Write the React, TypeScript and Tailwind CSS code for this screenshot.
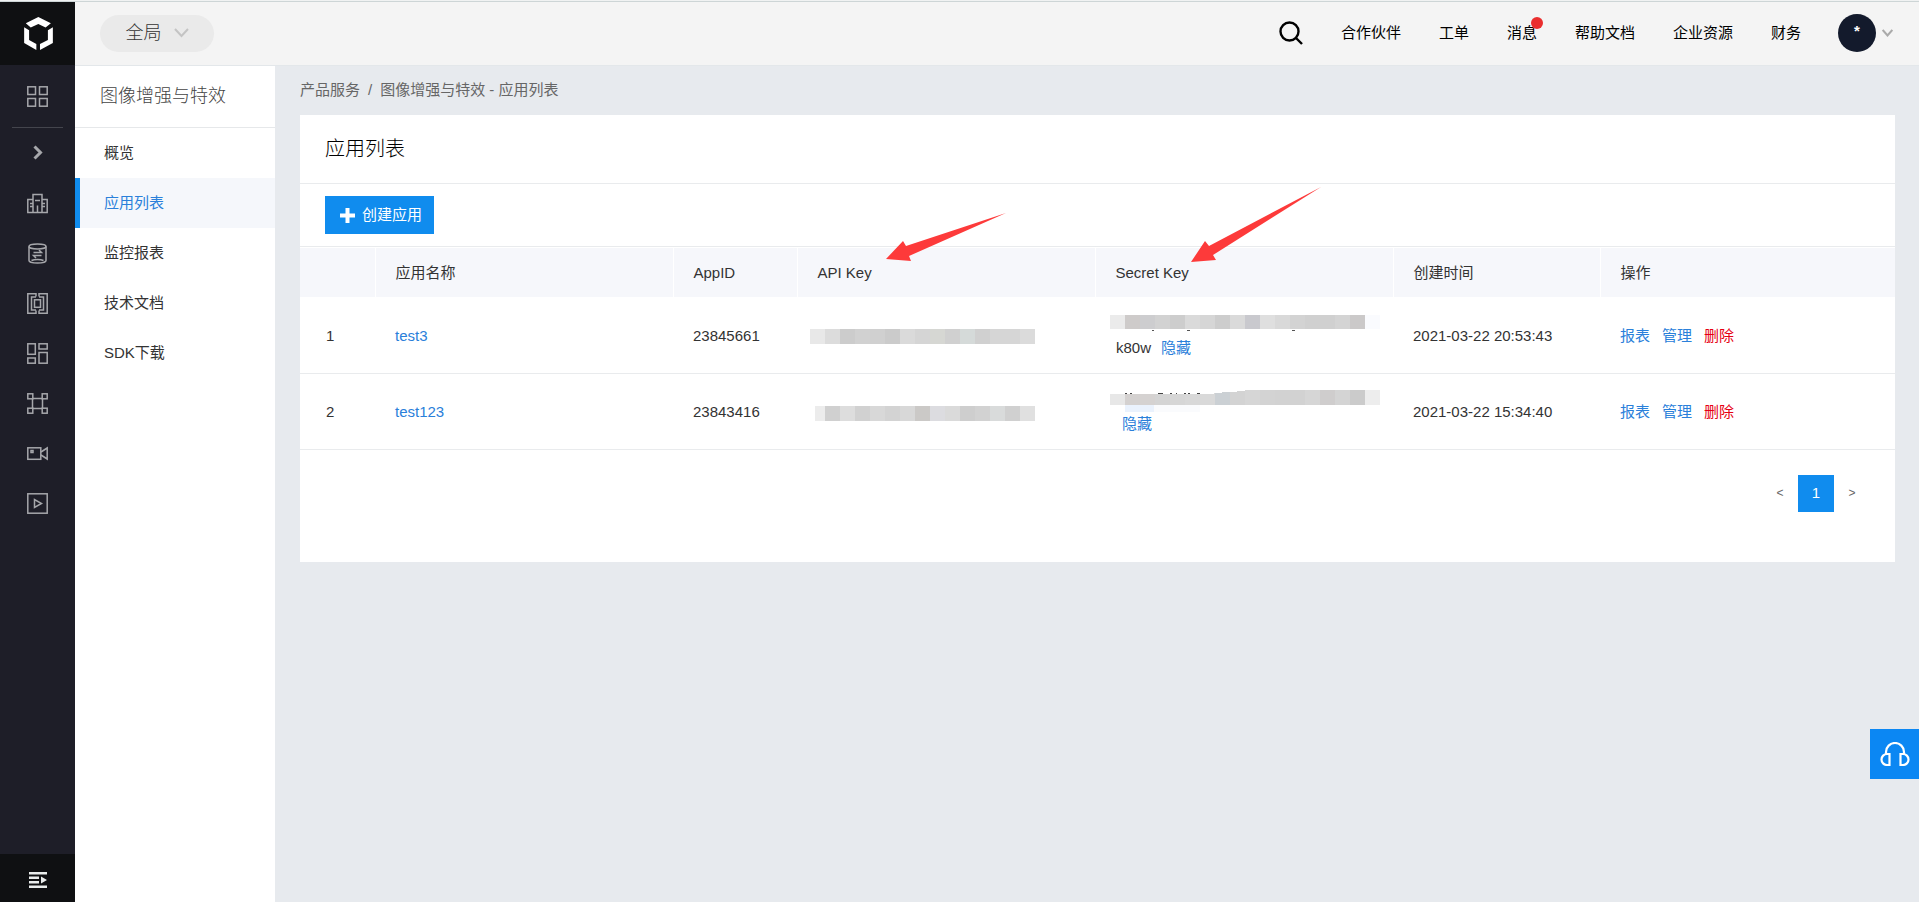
import type { ReactNode } from "react";

const NAV_LINKS = ["合作伙伴", "工单", "消息", "帮助文档", "企业资源", "财务"];

const MENU = ["概览", "应用列表", "监控报表", "技术文档", "SDK下载"];

const API_MASK_1 = [
  "#e8e8e8", "#dcdcdc", "#cccccc", "#d1d1d1", "#d0d0d0", "#cbcbcb", "#dadada", "#d5d5d5",
  "#d6d7d3", "#d0d0d0", "#d5dad9", "#d0d0d0", "#d6d6d6", "#d6d6d6", "#dbdbdb",
];
const API_MASK_2 = [
  "#ececec", "#d0d0d0", "#dddddd", "#d1d1d1", "#d8d8d8", "#d3d3d3", "#d8d8d8", "#cbc9c7",
  "#dcdce0", "#dadada", "#cecece", "#d2d2d2", "#d9dbdb", "#d0d0d0", "#e0e0e0",
];
const SECRET_MASK_1 = [
  "#ebebeb", "#cecbca", "#cdcdcf", "#d2d2d2", "#cdcdcd", "#dadada", "#d6d6d6", "#cdcdcd", "#dadada",
  "#c9c9ce", "#dfdfdf", "#d9d9d9", "#d3d3d3", "#d0d0d0", "#d0d0d0", "#d4d4d4", "#cbc9c9", "#fafbfe",
];
const SECRET_MASK_2 = [
  "#e7e7e7", "#d4d1d0", "#d5d2d1", "#d4d4d4", "#d6d6d6", "#d8d8d8", "#d9d9d9", "#cbd0d4", "#d3d3d3",
  "#d6d6d6", "#d3d3d3", "#d2d2d2", "#d2d2d2", "#d6d6d6", "#cfcdcd", "#d4d4d4", "#cbcbcb", "#ededed",
];

function RailIcon({ children }: { children: ReactNode }) {
  return (
    <svg width="21" height="21" viewBox="0 0 21 21" fill="none" stroke="#a6a7ab" strokeWidth="1.5">
      {children}
    </svg>
  );
}

const RAIL = [
  {
    label: "展开",
    icon: <path d="M7.5 3.5l6 6-6 6" strokeWidth="3" />,
  },
  {
    label: "云服务器",
    icon: <path d="M6 19.5V1.5h9v18M.8 6.5H6M15 6.5h5.2M.8 5.8v13.7h19.4V5.8M8 7.5h5M3 10.5h3M3 13.5h3M15 10.5h3M15 13.5h3M10.5 12.5v7" />,
  },
  {
    label: "数据库",
    icon: (
      <>
        <ellipse cx="10.5" cy="3.4" rx="8.5" ry="2.5" />
        <path d="M2 3.4v14.2c0 1.4 3.8 2.5 8.5 2.5s8.5-1.1 8.5-2.5V3.4M4.5 17.5c3-1.4 9-1.4 12 0" />
        <path d="M6.5 9.5h8L12 7M14.5 12.5h-8L9 15" />
      </>
    ),
  },
  {
    label: "人工智能",
    icon: (
      <>
        <path d="M9 3.5V.8H.8v19.4H9v-2.7M12 3.5V.8h8.2v19.4H12v-2.7M9 4H4.5v13H9M12 4h4.5v13H12" />
        <rect x="7.5" y="6.8" width="6" height="7.5" />
      </>
    ),
  },
  {
    label: "产品",
    icon: (
      <>
        <rect x=".8" y=".8" width="7.5" height="10.5" />
        <rect x="12" y=".8" width="8.2" height="5.2" />
        <rect x=".8" y="15" width="7.5" height="5.2" />
        <rect x="12" y="9.5" width="8.2" height="10.7" />
      </>
    ),
  },
  {
    label: "网络",
    icon: (
      <>
        <rect x=".8" y=".8" width="5" height="5" />
        <rect x="15.2" y=".8" width="5" height="5" />
        <rect x=".8" y="15.2" width="5" height="5" />
        <rect x="15.2" y="15.2" width="5" height="5" />
        <path d="M5.8 5.5h9.4M5.8 15.5h9.4M5.5 5.8v9.4M15.5 5.8v9.4" />
      </>
    ),
  },
  {
    label: "视频",
    icon: (
      <>
        <rect x=".8" y="4.8" width="13" height="11.5" />
        <path d="M14 9l6.2-4v11L14 12" />
        <rect x="4" y="7.5" width="2" height="2" />
      </>
    ),
  },
  {
    label: "播放",
    icon: (
      <>
        <rect x=".8" y=".8" width="19.4" height="19.4" />
        <path d="M7.5 6.5v8l7-4z" />
      </>
    ),
  },
];

function Mask({ cells, x = 0, y = 2, height = 17, children }: {
  cells: string[];
  x?: number;
  y?: number;
  height?: number;
  children?: ReactNode;
}) {
  return (
    <svg className="block" width={cells.length * 15} height={height} shapeRendering="crispEdges">
      {cells.map((fill, i) => (
        <rect key={i} x={i === 0 ? x : i * 15} y={y} width={i === 0 ? 15 - x : 15} height="15" fill={fill} />
      ))}
      {children}
    </svg>
  );
}

function RowActions() {
  return (
    <div className="flex gap-3">
      <a href="#report" className="text-[#2a80da]">报表</a>
      <a href="#manage" className="text-[#2a80da]">管理</a>
      <a href="#delete" className="text-[#e60012]">删除</a>
    </div>
  );
}

const APPS = [
  {
    name: "test3",
    appId: "23845661",
    created: "2021-03-22 20:53:43",
    api: <Mask cells={API_MASK_1} />,
    secret: (
      <>
        <Mask cells={SECRET_MASK_1} y={3} height={24}>
          <path d="M0 17.5h270" stroke="#fff" />
          <path d="M42 18h2M77 18h3M182 18h3" stroke="#555" />
        </Mask>
        <div className="flex gap-2.5 pl-1.5 leading-6">
          <span>k80w</span>
          <a href="#hide" className="text-[#2a80da]">隐藏</a>
        </div>
      </>
    ),
  },
  {
    name: "test123",
    appId: "23843416",
    created: "2021-03-22 15:34:40",
    api: <Mask cells={API_MASK_2} x={5} />,
    secret: (
      <>
        <Mask cells={SECRET_MASK_2} y={2} height={24}>
          <path d="M0 2h135v1L104 5v1H0z" fill="#fff" />
          <path d="M15 5.5h2M20 5.5h2M48 5.5h5M60 5.5h2M66 5.5h1M74 5.5h2M78 5.5h2M87 5.5h3" stroke="#444" />
          <rect x="15" y="17" width="29" height="7" fill="#eaf2fd" />
          <rect x="44" y="17" width="46" height="7" fill="#fafbfd" />
        </Mask>
        <div className="pl-3 leading-6">
          <a href="#hide" className="text-[#2a80da]">隐藏</a>
        </div>
      </>
    ),
  },
];

function Header() {
  return (
    <header className="flex h-16 items-center justify-between border-b border-[#e3e7ea] bg-[#f4f4f4] pb-px pl-[25px] pr-[26px]">
      <button type="button" className="flex h-[37px] w-[114px] items-center justify-center gap-3 rounded-full bg-[#eaeaea] text-lg font-light">
        全局
        <svg width="15" height="10" viewBox="0 0 15 10" fill="none" stroke="#c4c4c4" strokeWidth="2">
          <path d="M1 1l6.5 7L14 1" />
        </svg>
      </button>
      <div className="flex items-center">
        <button type="button" aria-label="搜索" className="mr-[38px]">
          <svg width="24" height="24" viewBox="0 0 24 24" fill="none" stroke="#000" strokeWidth="2.4">
            <circle cx="10.5" cy="10.5" r="9" />
            <path d="M17 17l6 6" />
          </svg>
        </button>
        <nav className="flex gap-[38px] text-black">
          {NAV_LINKS.map((label) => (
            <a key={label} href="#nav" className="relative">
              {label}
              {label === "消息" && <span className="absolute -right-1.5 -top-1 size-3 rounded-full bg-[#ea2e2e]" />}
            </a>
          ))}
        </nav>
        <button type="button" aria-label="账号" className="ml-[37px] flex items-center gap-1.5">
          <span className="flex size-[38px] items-center justify-center rounded-full bg-[#131a2c] pb-1 font-bold text-white">*</span>
          <svg width="11" height="8" viewBox="0 0 11 8" fill="none" stroke="#aaa" strokeWidth="2">
            <path d="M.7 1l4.8 5.5L10.3 1" />
          </svg>
        </button>
      </div>
    </header>
  );
}

export default function App() {
  return (
    <div className="flex min-h-screen flex-col bg-[#e7eaee] font-['Liberation_Sans','Noto_Sans_CJK_SC',sans-serif] text-[15px] leading-6 text-[#333]">
      <div className="h-0.5 border-b border-[#cdd5d6] bg-[#f0f2f2]" />
      <div className="flex flex-1">
        <aside className="flex w-[75px] shrink-0 flex-col bg-[#1e1e28]">
          <a href="#home" aria-label="控制台" className="flex h-[63px] items-center justify-center bg-[#0f1012] pl-0.5">
            <svg width="29" height="33" viewBox="0 0 87 100" fill="#fff">
              <path d="M5 19L43 0l38 19-16 13-22-11-23 11zM0 31l15 9v30l22 12v18L0 79zM87 31l-15 9v30L48 82v18l39-21z" />
            </svg>
          </a>
          <a href="#overview" aria-label="总览" className="flex h-[62px] items-center justify-center">
            <RailIcon>
              <rect x=".8" y=".8" width="7.7" height="7.7" />
              <rect x="12.5" y=".8" width="7.7" height="7.7" />
              <rect x=".8" y="12.5" width="7.7" height="7.7" />
              <rect x="12.5" y="12.5" width="7.7" height="7.7" />
            </RailIcon>
          </a>
          <hr className="mx-3 border-[#44454d]" />
          {RAIL.map(({ label, icon }) => (
            <a key={label} href="#service" aria-label={label} className="flex h-[50px] items-center justify-center">
              <RailIcon>{icon}</RailIcon>
            </a>
          ))}
          <button type="button" aria-label="展开菜单" className="mt-auto flex h-12 items-center justify-center bg-[#0f1012] pt-1">
            <svg width="18" height="16" viewBox="0 0 18 16" fill="#e9ecec">
              <path d="M0 0h18v2.5H0zM0 4.5h10V7H0zM0 9h10v2.5H0zM0 13.5h18V16H0zM12 4.500l6 3.500-6 3.500z" />
            </svg>
          </button>
        </aside>
        <div className="flex min-w-0 flex-1 flex-col">
          <Header />
          <div className="flex flex-1">
            <nav className="w-[200px] shrink-0 bg-white">
              <h2 className="flex h-[62px] items-center border-b border-[#e6e8ea] pb-0.5 pl-[25px] text-lg font-light text-[#444]">
                图像增强与特效
              </h2>
              {MENU.map((label) => (
                <a
                  key={label}
                  href="#menu"
                  className={
                    label === "应用列表"
                      ? "flex h-[50px] items-center border-l-[5px] border-[#108cee] bg-[#f5f7fb] pl-6 text-[#2a80da]"
                      : "flex h-[50px] items-center border-l-[5px] border-transparent pl-6"
                  }
                >
                  {label}
                </a>
              ))}
            </nav>
            <main className="min-w-0 flex-1 pl-[25px] pr-6">
              <div className="flex h-[49px] items-center gap-2 pb-0.5 text-[#666]">
                <a href="#products">产品服务</a>
                <span>/</span>
                <span>图像增强与特效 - 应用列表</span>
              </div>
              <section className="bg-white">
                <h1 className="flex h-[69px] items-center border-b border-[#e9ebed] pl-[25px] text-xl font-light text-black">应用列表</h1>
                <div className="flex h-[63px] items-center border-b border-[#e9ebed] pl-[25px]">
                  <button type="button" className="flex h-[38px] items-center gap-[7px] bg-[#108cee] pl-[15px] pr-3 text-white">
                    <svg width="15" height="15" viewBox="0 0 15 15" fill="#fff">
                      <path d="M5.5 0h4v5.5H15v4H9.5V15h-4V9.5H0v-4h5.5z" />
                    </svg>
                    创建应用
                  </button>
                </div>
                <table className="mt-px w-full table-fixed border-collapse text-left">
                  <colgroup>
                    <col className="w-[75px]" />
                    <col />
                    <col className="w-[124px]" />
                    <col className="w-[298px]" />
                    <col className="w-[298px]" />
                    <col className="w-[207px]" />
                    <col className="w-[295px]" />
                  </colgroup>
                  <thead>
                    <tr className="h-[49px] bg-[#f6f7fb]">
                      <th className="border-r border-white" />
                      <th className="border-r border-white px-5 font-normal">应用名称</th>
                      <th className="border-r border-white px-5 font-normal">AppID</th>
                      <th className="relative border-r border-white px-5 font-normal">
                        API Key
                        <svg className="absolute -top-9 left-[88px]" width="122" height="50" viewBox="0 0 122 50" fill="#fd3a3a">
                          <path d="M0 47l17-18 3 5L120 1 23 44l2 5z" />
                        </svg>
                      </th>
                      <th className="relative border-r border-white px-5 font-normal">
                        Secret Key
                        <svg className="absolute -top-[62px] left-[95px]" width="132" height="78" viewBox="0 0 132 78" fill="#fd3a3a">
                          <path d="M0 76l14-21 4 5L130 1 22 69l3 5z" />
                        </svg>
                      </th>
                      <th className="border-r border-white px-5 font-normal">创建时间</th>
                      <th className="px-5 font-normal">操作</th>
                    </tr>
                  </thead>
                  <tbody className="[&_td]:pt-0.5">
                    {APPS.map((app, i) => (
                      <tr key={app.appId} className="h-[76px] border-b border-[#e9ebed]">
                        <td className="pl-[26px]">{i + 1}</td>
                        <td className="px-5">
                          <a href="#app" className="text-[#2a80da]">{app.name}</a>
                        </td>
                        <td className="px-5">{app.appId}</td>
                        <td className="pl-[13px]">{app.api}</td>
                        <td className="pl-[15px]">{app.secret}</td>
                        <td className="px-5">{app.created}</td>
                        <td className="px-5">
                          <RowActions />
                        </td>
                      </tr>
                    ))}
                  </tbody>
                </table>
                <div className="flex justify-end pb-[50px] pr-[25px] pt-[25px] text-xs text-[#666]">
                  <button type="button" aria-label="上一页" className="h-[37px] w-9">&lt;</button>
                  <button type="button" className="h-[37px] w-9 bg-[#108cee] text-[15px] text-white">1</button>
                  <button type="button" aria-label="下一页" className="h-[37px] w-9">&gt;</button>
                </div>
              </section>
            </main>
          </div>
        </div>
      </div>
      <button type="button" aria-label="在线客服" className="fixed bottom-[123px] right-0 flex h-[50px] w-[49px] items-center justify-center bg-[#0b87f3]">
        <svg width="30" height="24" viewBox="0 0 30 24" fill="none" stroke="#fff" strokeWidth="2.2">
          <path d="M6 12v-2a9 9 0 0 1 18 0v2M9.5 12v11H7a5.5 5.5 0 0 1 0-11zM20.5 12v11H23a5.5 5.5 0 0 0 0-11z" />
        </svg>
      </button>
    </div>
  );
}
